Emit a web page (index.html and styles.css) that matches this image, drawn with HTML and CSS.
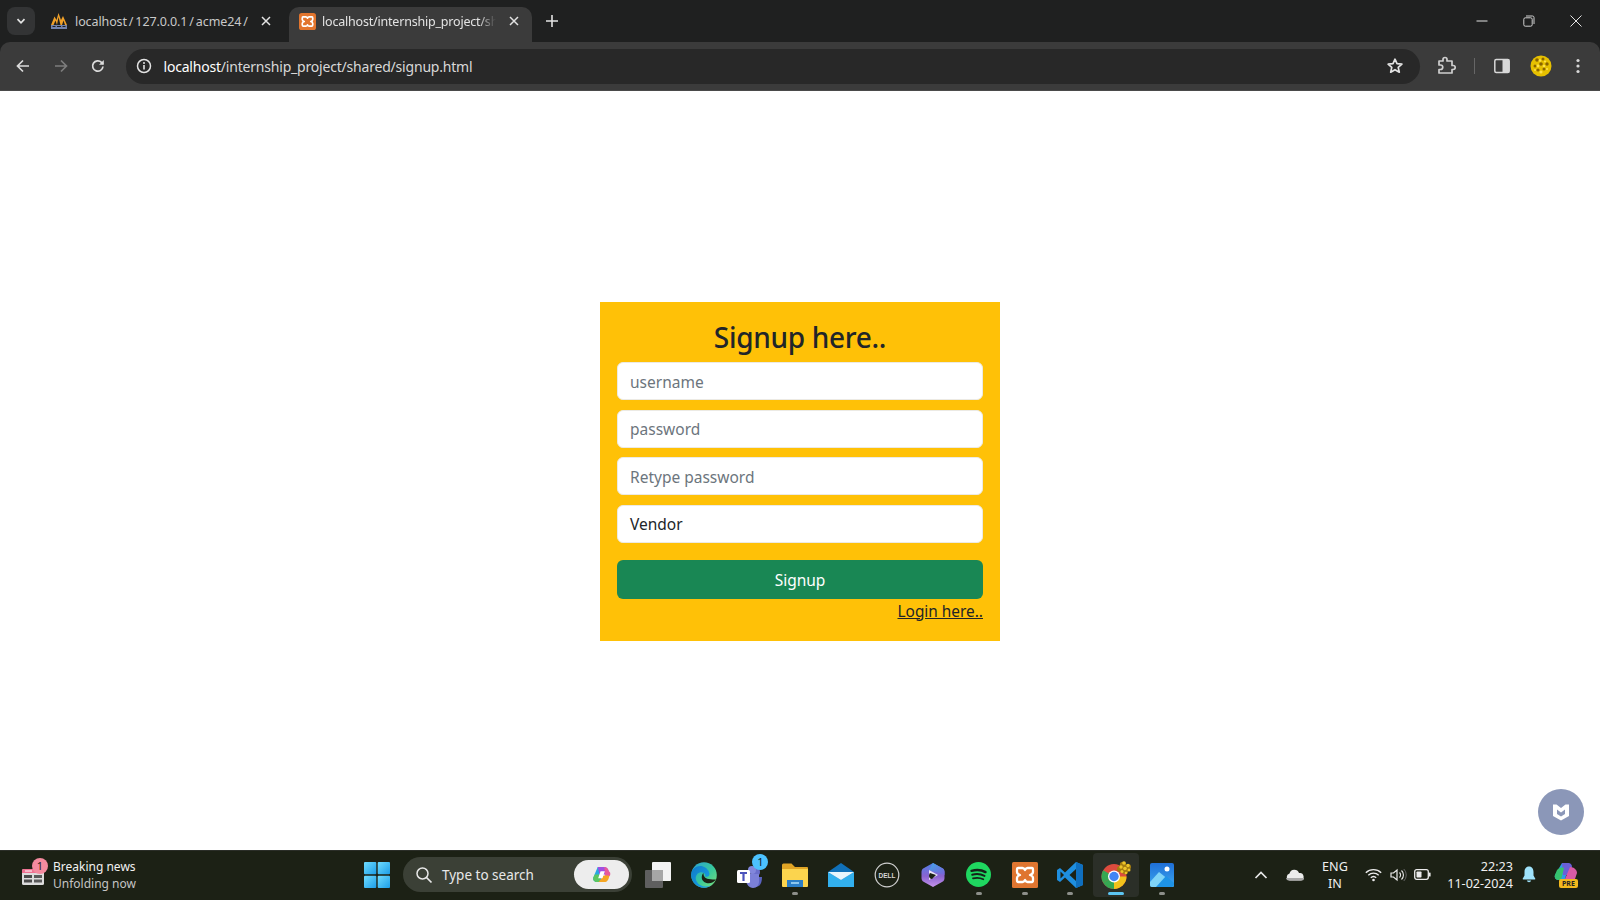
FILE: index.html
```html
<!DOCTYPE html>
<html lang="en">
<head>
<meta charset="utf-8">
<title>Signup</title>
<link rel="stylesheet" href="styles.css">
</head>
<body>
<header class="chrome">
<div class="tabstrip">
  <button class="tabsearch"><svg width="12" height="12" viewBox="0 0 12 12"><path d="M2.5 4.2 6 7.8l3.5-3.6" fill="none" stroke="#e3e3e3" stroke-width="1.7"/></svg></button>
  <div class="tab">
    <svg class="favicon" width="18" height="18" viewBox="0 0 18 18"><path d="M1 13 4.500 4.500 6.500 8 8.500 1 11 8l2-4 4 9z" fill="#f0a028"/><path d="M3.500 13 5.500 8.500 7 13zM8.500 5 10.500 13H7zM12 13l1.500-4.500L15 13z" fill="#1f2020"/><rect x="1" y="13" width="16" height="4" fill="#7283ad"/><path d="M2.500 14.500h3M7 14.500h4M12.500 14.500h3" stroke="#1f2020"/></svg>
    <span class="tabtitle">localhost / 127.0.0.1 / acme24 /</span>
    <svg class="tabclose" width="12" height="12" viewBox="0 0 12 12"><path d="M2 2l8 8M10 2l-8 8" stroke="#e3e3e3" stroke-width="1.5"/></svg>
  </div>
  <div class="tab tab-active">
    <svg class="favicon" width="17" height="17" viewBox="0 0 26 26"><rect width="26" height="26" rx="4" fill="#e2752e"/><path d="M6 6h4.500q1.500 0 2.500 2 1-2 2.500-2H20q1 0 1 2v2q0 2-3 3 3 1 3 3v2q0 2-1 2h-4.500q-1.500 0-2.500-2-1 2-2.500 2H6q-1 0-1-2v-2q0-2 3-3-3-1-3-3V8q0-2 1-2z" fill="none" stroke="#fff" stroke-width="2.600" stroke-linejoin="round"/></svg>
    <span class="tabtitle tabtitle-active">localhost/internship_project/sha</span>
    <svg class="tabclose" width="12" height="12" viewBox="0 0 12 12"><path d="M2 2l8 8M10 2l-8 8" stroke="#e3e3e3" stroke-width="1.5"/></svg>
  </div>
  <svg class="newtab" width="14" height="14" viewBox="0 0 14 14"><path d="M7 1v12M1 7h12" stroke="#e3e3e3" stroke-width="1.600"/></svg>
  <div class="winctrls">
    <svg width="12" height="12" viewBox="0 0 12 12"><path d="M.5 6h11" stroke="#e3e3e3"/></svg>
    <svg width="12" height="12" viewBox="0 0 12 12"><rect x=".8" y="2.800" width="8.400" height="8.400" rx="1.500" fill="none" stroke="#d0d0d0"/><path d="M3 1h6.500A1.500 1.500 0 0 1 11 2.500V9" fill="none" stroke="#d0d0d0"/></svg>
    <svg width="12" height="12" viewBox="0 0 12 12"><path d="M.5.5l11 11M11.500.5l-11 11" stroke="#e3e3e3"/></svg>
  </div>
</div>
<div class="toolbar">
  <svg class="navicon" width="16" height="16" viewBox="0 0 16 16"><path d="M14 8H3M8 2.500 2.500 8 8 13.500" fill="none" stroke="#dcdcdc" stroke-width="1.700"/></svg>
  <svg class="navicon" width="16" height="16" viewBox="0 0 16 16"><path d="M2 8h11M8 2.500 13.500 8 8 13.500" fill="none" stroke="#7d7d7d" stroke-width="1.700"/></svg>
  <svg class="navicon" width="16" height="16" viewBox="0 0 16 16"><path d="M13 8.500A5.200 5.200 0 1 1 11.500 4.300L13 6" fill="none" stroke="#dcdcdc" stroke-width="1.700"/><path d="M13.800 2v4.800H9z" fill="#dcdcdc"/></svg>
  <div class="omnibox">
    <svg class="infoicon" width="16" height="16" viewBox="0 0 16 16"><circle cx="8" cy="8" r="6.500" fill="none" stroke="#e3e3e3" stroke-width="1.500"/><path d="M8 7v4.500" stroke="#e3e3e3" stroke-width="1.600"/><circle cx="8" cy="4.900" r="1" fill="#e3e3e3"/></svg>
    <span class="url"><span class="url-host">localhost</span>/internship_project/shared/signup.html</span>
    <svg class="star" width="18" height="18" viewBox="0 0 18 18"><path d="M9 2.200l2 4.500 4.900.5-3.700 3.200 1.100 4.800L9 12.700l-4.300 2.500 1.100-4.800L2.100 7.200 7 6.700z" fill="none" stroke="#e3e3e3" stroke-width="1.700" stroke-linejoin="round"/></svg>
  </div>
  <svg class="exticon" width="20" height="20" viewBox="0 0 20 20"><path d="M3 5h4V3.500a2 2 0 0 1 4 0V5h5v4.500h1.200a2 2 0 0 1 0 4H16V17H3v-3.500h1.500a2.200 2.200 0 0 0 0-4.500H3z" fill="none" stroke="#cfcfcf" stroke-width="1.700" stroke-linejoin="round"/></svg>
  <div class="tbsep"></div>
  <svg class="panelicon" width="16" height="16" viewBox="0 0 16 16"><rect x=".8" y="1.500" width="14.400" height="13" rx="1.500" fill="none" stroke="#d8d8d8" stroke-width="1.500"/><rect x="8.500" y="1.500" width="6.700" height="13" fill="#d8d8d8"/></svg>
  <svg class="avatar" width="22" height="22" viewBox="0 0 22 22"><circle cx="11" cy="11" r="10.500" fill="#e6c000"/><g fill="#8a6400"><circle cx="7" cy="5" r="1.800"/><circle cx="13" cy="4" r="1.500"/><circle cx="17" cy="9" r="1.700"/><circle cx="5" cy="11" r="1.500"/><circle cx="11" cy="9" r="1.800"/><circle cx="14" cy="14" r="1.500"/><circle cx="8" cy="15" r="1.600"/></g><g fill="#ffe14a"><circle cx="10" cy="5.500" r="1.300"/><circle cx="15" cy="6.500" r="1.100"/><circle cx="8" cy="11" r="1.400"/><circle cx="14" cy="11" r="1.300"/><circle cx="11" cy="17" r="1.500"/><circle cx="17" cy="14" r="1.100"/><circle cx="5" cy="15" r="1"/></g></svg>
  <svg class="menuicon" width="4" height="16" viewBox="0 0 4 16"><circle cx="2" cy="2.500" r="1.600" fill="#d8d8d8"/><circle cx="2" cy="8" r="1.600" fill="#d8d8d8"/><circle cx="2" cy="13.500" r="1.600" fill="#d8d8d8"/></svg>
</div>
</header>
<main class="page">
  <form class="card">
    <h3 class="card-title">Signup here..</h3>
    <input class="field" type="text" placeholder="username">
    <input class="field" type="password" placeholder="password">
    <input class="field" type="password" placeholder="Retype password">
    <div class="field field-select">Vendor</div>
    <button class="submit" type="button">Signup</button>
    <div class="login-row"><a class="login" href="#">Login here..</a></div>
  </form>
  <div class="shield">
    <svg width="20" height="20" viewBox="0 0 20 20"><path d="M2 2.500h3.500L10 6l4.500-3.500H18V14l-8 4.500L2 14z" fill="#fff"/><path d="M6 7.500 10 10.500l4-3V12l-4 2.500L6 12z" fill="#8b97b8"/></svg>
  </div>
</main>
<footer class="taskbar">
  <div class="news">
    <div class="newsicon">
      <svg width="24" height="22" viewBox="0 0 24 22"><rect x="1" y="5" width="22" height="16" rx="1.500" fill="#dcdcdc"/><path d="M1 6.500A1.500 1.500 0 0 1 2.500 5H23v4H1z" fill="#ef7192"/><path d="M4 7h7" stroke="#fff" stroke-width="1"/><rect x="3" y="11" width="8" height="3" fill="#4a4a4a"/><rect x="3" y="15.500" width="8" height="3" fill="#4a4a4a"/><rect x="13" y="11" width="8" height="3" fill="#5a5a5a"/><rect x="13" y="15.500" width="8" height="3" fill="#5a5a5a"/></svg>
      <span class="newsbadge">1</span>
    </div>
    <div class="newstext"><span class="newshead">Breaking news</span><span class="newssub">Unfolding now</span></div>
  </div>
  <svg class="winlogo" width="26" height="26" viewBox="0 0 26 26"><defs><linearGradient id="w" x1="0" y1="0" x2="1" y2="1"><stop offset="0" stop-color="#6fdcff"/><stop offset="1" stop-color="#1c9de8"/></linearGradient></defs><rect width="12.300" height="12.300" rx="1" fill="url(#w)"/><rect x="13.700" width="12.300" height="12.300" rx="1" fill="url(#w)"/><rect y="13.700" width="12.300" height="12.300" rx="1" fill="url(#w)"/><rect x="13.700" y="13.700" width="12.300" height="12.300" rx="1" fill="url(#w)"/></svg>
  <div class="searchbox">
    <svg width="18" height="18" viewBox="0 0 18 18"><circle cx="7.500" cy="7.500" r="5.500" fill="none" stroke="#e8e8e8" stroke-width="1.500"/><path d="M11.500 11.500l5 5" stroke="#e8e8e8" stroke-width="1.700"/></svg>
    <span class="searchtext">Type to search</span>
    <div class="copilotpill">
      <svg width="19" height="19" viewBox="0 0 20 20"><path d="M6 2h6L9 18H5C2 18 .5 15.500 1.500 13z" fill="#28a8e0"/><path d="M6 2h7c2 0 4 1.500 4.500 4L16 10H8z" fill="#a24fe0"/><path d="M13 2c2 0 4 1.500 4.500 4L19 8c1 3-1 5-3 5h-2z" fill="#e85a9a"/><path d="M3 10h6l-1 8H5C2 18 .5 15.500 1.500 13z" fill="#5cc760"/><path d="M12 11h6c0 4-2 7-5 7H7z" fill="#f5a623"/><path d="M9 6.500h4.500L11 14H6.500z" fill="#fff"/></svg>
    </div>
  </div>
  <div class="apps">
    <div class="app"><svg width="26" height="26" viewBox="0 0 26 26"><rect x="0" y="8" width="18" height="18" rx="1" fill="#5f5f5f"/><rect x="7" y="0" width="19" height="19" rx="1" fill="#f2f2f2"/><rect x="7" y="8" width="11" height="11" fill="#a6a6a6"/></svg></div>
    <div class="app"><svg width="26" height="26" viewBox="0 0 26 26"><defs><linearGradient id="e1" x1="0" y1="0" x2="1" y2="1"><stop offset="0" stop-color="#2a9fd8"/><stop offset=".55" stop-color="#38c99a"/><stop offset="1" stop-color="#7fe07a"/></linearGradient><linearGradient id="e2" x1="0" y1="0" x2="1" y2="1"><stop offset="0" stop-color="#0f7ac8"/><stop offset="1" stop-color="#1ba5ea"/></linearGradient></defs><circle cx="13" cy="13" r="12.800" fill="url(#e1)"/><path d="M.2 13C.2 6 7 3 12 4.500c5 1.500 6.500 6 6.500 7.500 0 1.500-1 2.800-3 2.800-1.500 0-2-.8-1-1.800-1-2-3-3-5.500-2.500C5 11.500 3.500 16 6 20c2.500 4 8 6 14 3.500C17.500 25.200 15 25.800 13 25.800 6 25.800.2 20 .2 13z" fill="url(#e2)"/><path d="M25 17.500c-2 3-6 4.500-9.500 3.500-3.500-1-5.500-4-4.500-7.500.3-1 .8-2 1.500-2.500-.3 3 1.500 5.500 5 6 3 .5 5.500.5 7.500.5z" fill="#1c2115"/></svg></div>
    <div class="app"><svg width="30" height="28" viewBox="0 0 30 28"><circle cx="21" cy="11" r="4" fill="#6a6ecb"/><path d="M15 16h12c0 6-2 10-7 10-4 0-5-4-5-10z" fill="#5a62c0"/><circle cx="17" cy="9" r="4" fill="#8287dc"/><path d="M11 13h13v7c0 4-2 7-6 7s-7-4-7-8z" fill="#7b80d8"/><rect x="2" y="9" width="13" height="13" rx="1.500" fill="#fff"/><path d="M5 12h7M8.500 12v8" stroke="#4b53bc" stroke-width="2.200"/></svg><span class="appbadge">1</span></div>
    <div class="app app-running"><svg width="26" height="24" viewBox="0 0 26 24"><path d="M0 2a1.500 1.500 0 0 1 1.500-1.500h8L13 4h12a1 1 0 0 1 1 1v2H0z" fill="#e0a526"/><path d="M0 6h26v17a1 1 0 0 1-1 1H1a1 1 0 0 1-1-1z" fill="#fbd44e"/><rect x="5" y="17" width="16" height="7" fill="#2b7ec8"/><rect x="9" y="19" width="8" height="2" fill="#8cc6ee"/></svg></div>
    <div class="app"><svg width="26" height="24" viewBox="0 0 26 24"><path d="M0 9 13 0l13 9v13a2 2 0 0 1-2 2H2a2 2 0 0 1-2-2z" fill="#1070b8"/><path d="M0 9l13 8 13-8v15H0z" fill="#32b0ee"/><path d="M0 9h26L13 17z" fill="#e8f5fd"/></svg></div>
    <div class="app"><svg width="26" height="26" viewBox="0 0 26 26"><circle cx="13" cy="13" r="11.800" fill="none" stroke="#cfcfcf" stroke-width="1.200"/><text x="13" y="15.500" text-anchor="middle" class="delltext">DELL</text></svg></div>
    <div class="app"><svg width="24" height="26" viewBox="0 0 24 26"><defs><linearGradient id="m1" x1="0" y1="0" x2="0" y2="1"><stop offset="0" stop-color="#4f7fe6"/><stop offset=".55" stop-color="#8a63d0"/><stop offset="1" stop-color="#c593ea"/></linearGradient><linearGradient id="m2" x1="0" y1="0" x2="1" y2="1"><stop offset="0" stop-color="#3fa6e8"/><stop offset="1" stop-color="#7b62d8"/></linearGradient></defs><path d="M12 1 21 6c2 1 2.500 2.500 2.500 4v6c0 1.500-.5 3-2.500 4l-9 5-9-5c-2-1-2.500-2.500-2.500-4v-6C.5 8.500 1 7 3 6z" fill="url(#m1)"/><path d="M12 1 21 6c2 1 2.500 2.500 2.500 4v3L8 8z" fill="url(#m2)"/><path d="M8 8l9 5-9 5z" fill="#eae6f6"/><path d="M9 11l6 2-4 4c-2 0-3-1.500-3-3s.5-2.500 1-3z" fill="#1c2115"/></svg></div>
    <div class="app app-running"><svg width="25" height="25" viewBox="0 0 25 25"><circle cx="12.500" cy="12.500" r="12.500" fill="#1fd760"/><g fill="none" stroke="#15201a" stroke-linecap="round"><path d="M5.500 8.800c5-1.300 10-1 14 1.300" stroke-width="2.400"/><path d="M6.200 12.700c4.500-1.100 8.700-.7 12.300 1.200" stroke-width="2"/><path d="M7 16.300c3.800-.9 7.300-.6 10.300 1" stroke-width="1.700"/></g></svg></div>
    <div class="app app-running"><svg width="26" height="26" viewBox="0 0 26 26"><rect width="26" height="26" rx="1.500" fill="#df7530"/><path d="M6 6h4.500q1.500 0 2.500 2 1-2 2.500-2H20q1 0 1 2v2q0 2-3 3 3 1 3 3v2q0 2-1 2h-4.500q-1.500 0-2.500-2-1 2-2.500 2H6q-1 0-1-2v-2q0-2 3-3-3-1-3-3V8q0-2 1-2z" fill="none" stroke="#fff" stroke-width="2.300" stroke-linejoin="round"/></svg></div>
    <div class="app app-running"><svg width="26" height="26" viewBox="0 0 26 26"><path d="M19 0l7 3v20l-7 3L8 15.500 3 20l-3-2V8l3-2 5 4.500z" fill="#1f8fe0"/><path d="M19 0l7 3v20l-7 3z" fill="#0f6fbf"/><path d="M3.500 9.500v7L7 13z" fill="#1c2115"/><path d="M19 7l-6.500 6 6.500 6z" fill="#1c2115"/></svg></div>
    <div class="app app-active"><svg width="32" height="30" viewBox="0 0 32 30"><circle cx="14" cy="16.500" r="12.500" fill="#dd4b3e"/><path d="M14 16.500 3.200 22.800A12.500 12.500 0 0 1 3.200 10.200z" fill="#35a853"/><path d="M14 16.500 3.200 22.800A12.500 12.500 0 0 0 14 29z" fill="#35a853"/><path d="M14 16.500V29a12.500 12.500 0 0 0 12.500-12.500z" fill="#f2c21b"/><circle cx="14" cy="16.500" r="6" fill="#fff"/><circle cx="14" cy="16.500" r="4.700" fill="#4285f4"/><g fill="#a47c10"><circle cx="23" cy="5" r="3.200"/><circle cx="28" cy="7" r="3"/><circle cx="20" cy="9" r="3"/><circle cx="25" cy="11" r="3.200"/></g><g fill="#eec52a"><circle cx="24" cy="3" r="1.800"/><circle cx="28" cy="5.500" r="1.700"/><circle cx="21" cy="7" r="1.700"/><circle cx="25" cy="8.500" r="1.800"/><circle cx="29" cy="10" r="1.500"/><circle cx="22" cy="11.500" r="1.500"/><circle cx="26" cy="13" r="1.300"/></g></svg></div>
    <div class="app app-running"><svg width="24" height="24" viewBox="0 0 24 24"><defs><linearGradient id="p1" x1="0" y1="0" x2="0" y2="1"><stop offset="0" stop-color="#1f6fd8"/><stop offset="1" stop-color="#3aa6ee"/></linearGradient></defs><rect width="24" height="24" rx="2" fill="url(#p1)"/><path d="M0 19 9 9l15 12v1a2 2 0 0 1-2 2H2a2 2 0 0 1-2-2z" fill="#7fd3f7"/><path d="M6 24 16 13l8 7v2a2 2 0 0 1-2 2z" fill="#1e93e6"/><circle cx="17" cy="6" r="2.500" fill="#fff"/></svg></div>
  </div>
  <div class="tray">
    <svg class="chev" width="14" height="10" viewBox="0 0 14 10"><path d="M1.500 8 7 2.500 12.500 8" fill="none" stroke="#e8e8e8" stroke-width="1.700"/></svg>
    <svg class="cloud" width="18" height="12" viewBox="0 0 18 12"><path d="M4 11.500A3.500 3.500 0 0 1 3.500 4.600 5 5 0 0 1 13 4a3.800 3.800 0 0 1 1.500 7.500z" fill="#ececec"/><path d="M0 9h18v.500a2 2 0 0 1-2 2H3a3 3 0 0 1-3-2.500z" fill="#a9a9a9"/></svg>
    <div class="lang"><span>ENG</span><span>IN</span></div>
    <svg class="wifi" width="17" height="14" viewBox="0 0 17 14"><g fill="none" stroke="#ececec" stroke-width="1.300"><path d="M.8 4.800a11 11 0 0 1 15.400 0"/><path d="M3.300 7.300a7.500 7.500 0 0 1 10.400 0"/><path d="M5.800 9.800a3.900 3.900 0 0 1 5.400 0"/></g><circle cx="8.500" cy="12" r="1.300" fill="#ececec"/></svg>
    <svg class="vol" width="17" height="14" viewBox="0 0 17 14"><path d="M1 5v4h2.500L7 12V2L3.500 5z" fill="none" stroke="#ececec" stroke-width="1.200"/><path d="M9.500 4.500a3.500 3.500 0 0 1 0 5M11.500 2.500a6.200 6.200 0 0 1 0 9" fill="none" stroke="#ececec" stroke-width="1.100"/><path d="M13.800 1a8.500 8.500 0 0 1 0 12" fill="none" stroke="#666" stroke-width="1"/></svg>
    <svg class="batt" width="17" height="11" viewBox="0 0 17 11"><rect x=".7" y=".7" width="13.600" height="9.600" rx="2" fill="none" stroke="#ececec" stroke-width="1.300"/><rect x="2.500" y="2.500" width="5" height="6" rx=".7" fill="#ececec"/><rect x="15" y="3.500" width="1.600" height="4" rx=".6" fill="#ececec"/></svg>
    <div class="clock"><span>22:23</span><span>11-02-2024</span></div>
    <svg class="bell" width="14" height="17" viewBox="0 0 14 17"><path d="M7 .5C3.800.5 2.500 3 2.500 6v3.500L.8 12.500a.6.6 0 0 0 .5.900h11.400a.6.6 0 0 0 .5-.9L11.500 9.500V6C11.500 3 10.200.5 7 .5z" fill="#9fe3fb"/><path d="M4.800 14.500a2.300 2.300 0 0 0 4.400 0z" fill="#9fe3fb"/></svg>
    <div class="copre">
      <svg width="24" height="20" viewBox="0 0 24 20"><path d="M8 1h7l-4 17H5C2 18 0 16 1 13z" fill="#2f9be8"/><path d="M8 1h6c3 0 4 2 4 4l-2 8H9z" fill="#6a5fd8"/><path d="M16 5c4 0 7 3 7 6l-2 6H11z" fill="#d95aa5"/><path d="M3 8c2-2 4-3 7-2l-3 12H5C2 18 0 16 1 13z" fill="#35c26e"/></svg>
      <span class="prebadge">PRE</span>
    </div>
  </div>
</footer>
</body>
</html>
```

FILE: styles.css
```css
* { box-sizing: border-box; }
html, body { margin: 0; height: 100%; }
body {
  width: 1600px;
  height: 900px;
  display: flex;
  flex-direction: column;
  overflow: hidden;
  background: #fff;
  font-family: "Noto Sans", "Open Sans", sans-serif;
}
svg { display: block; flex: none; }

/* browser chrome */
.chrome { flex: none; background: #1f2020; }
.tabstrip {
  height: 42px;
  display: flex;
  align-items: flex-start;
  padding-left: 7px;
}
.tabsearch {
  width: 28px;
  height: 28px;
  margin-top: 7px;
  border: 0;
  border-radius: 8px;
  background: #333435;
  display: flex;
  align-items: center;
  justify-content: center;
  padding: 0;
}
.tab {
  width: 239px;
  height: 35px;
  margin-top: 7px;
  margin-left: 15px;
  display: flex;
  align-items: center;
  color: #c9c9c9;
  font-size: 12.500px;
  padding-bottom: 7px;
}
.tab .favicon { margin-right: 7px; }
.tabtitle { width: 172px; white-space: nowrap; letter-spacing: -.1px; word-spacing: -1.200px; }
.tab .tabclose { margin-left: 13px; }
.tab-active {
  width: 243px;
  margin-left: 0;
  padding-left: 10px;
  background: #3b3b3b;
  border-radius: 10px 10px 0 0;
  color: #e3e3e3;
}
.tab-active .favicon { margin-right: 6px; }
.tabtitle-active {
  width: 174px;
  letter-spacing: -.2px;
  -webkit-mask-image: linear-gradient(90deg, #000 90%, transparent 100%);
  mask-image: linear-gradient(90deg, #000 90%, transparent 100%);
}
.tab-active .tabclose { margin-left: 12px; }
.newtab { margin: 14px 0 0 13px; }
.winctrls {
  margin-left: auto;
  display: flex;
  gap: 35px;
  padding: 15px 18px 0 0;
}
.toolbar {
  height: 49px;
  background: #3b3b3b;
  border-radius: 10px 10px 0 0;
  display: flex;
  align-items: center;
  padding-left: 15px;
  border-bottom: 1px solid #4a4a4a;
}
.navicon { margin-right: 21.500px; }
.navicon:nth-child(3) { margin-right: 19.500px; }
.omnibox {
  width: 1294px;
  height: 35px;
  background: #282828;
  border-radius: 18px;
  display: flex;
  align-items: center;
  padding-left: 10px;
  color: #d8d8d8;
  font-size: 14px;
}
.infoicon { margin-right: 12px; }
.url { letter-spacing: -.2px; }
.url-host { color: #fff; }
.star { margin-left: auto; margin-right: 16px; }
.exticon { margin-left: 16px; }
.tbsep { width: 1px; height: 16px; background: #666; margin-left: 18px; }
.panelicon { margin-left: 19px; }
.avatar { margin-left: 20px; }
.menuicon { margin-left: 24px; }

/* page */
.page {
  flex: 1;
  position: relative;
  display: flex;
  align-items: flex-start;
  justify-content: center;
  padding-top: 211px;
}
.card {
  width: 400px;
  height: 339px;
  background: #ffc107;
  padding: 16px 17px 0;
  display: flex;
  flex-direction: column;
  color: #212529;
}
.card-title {
  margin: 0 0 6px;
  height: 38px;
  text-align: center;
  font-size: 28px;
  font-weight: 500;
  line-height: 38px;
  letter-spacing: -.3px;
}
.field {
  height: 38px;
  flex: none;
  width: 100%;
  border: 1px solid #eceae4;
  border-radius: 6px;
  background: #fff;
  padding: 1px 12px 0;
  margin-bottom: 9.500px;
  font: 15.500px/35px "Noto Sans", "Open Sans", sans-serif;
  color: #212529;
}
.field::placeholder { color: #6c757d; opacity: 1; }
.field-select { margin-bottom: 17px; }
.submit {
  height: 39px;
  flex: none;
  border: 0;
  border-radius: 6px;
  background: #198754;
  color: #fff;
  padding-top: 2px;
  font: 15.500px "Noto Sans", "Open Sans", sans-serif;
}
.login-row { text-align: right; margin-top: 1px; font-size: 15.400px; line-height: 24px; }
.login { color: #212529; }
.shield {
  position: absolute;
  right: 16px;
  bottom: 15px;
  width: 46px;
  height: 46px;
  border-radius: 50%;
  background: #8b97b8;
  display: flex;
  align-items: center;
  justify-content: center;
}

/* taskbar */
.taskbar {
  height: 50px;
  flex: none;
  background: #1c2115;
  border-top: 1px solid #2b2e28;
  display: flex;
  align-items: center;
  padding: 0 0 2px 21px;
  color: #f0f0f0;
}
.news { width: 343px; display: flex; align-items: center; flex: none; }
.newsicon { position: relative; width: 24px; height: 22px; margin-right: 8px; }
.newsbadge {
  position: absolute;
  top: -6px;
  left: 11px;
  width: 16px;
  height: 16px;
  border-radius: 50%;
  background: #f48a9f;
  color: #222;
  font-size: 11px;
  line-height: 16px;
  text-align: center;
}
.newstext { display: flex; flex-direction: column; font-size: 12px; line-height: 17px; }
.newshead { color: #f2f2f2; }
.newssub { color: #c4c4c4; }
.winlogo { margin-right: 13px; }
.searchbox {
  width: 229px;
  height: 35px;
  flex: none;
  border-radius: 18px;
  background: #3b4036;
  display: flex;
  align-items: center;
  padding-left: 12px;
  font-size: 13.500px;
  color: #e8e8e8;
}
.searchtext { margin-left: 9px; }
.copilotpill {
  margin-left: auto;
  margin-right: 3px;
  width: 55px;
  height: 29px;
  border-radius: 15px;
  background: #ededed;
  display: flex;
  align-items: center;
  justify-content: center;
}
.apps { display: flex; margin-left: 3px; }
.app {
  position: relative;
  width: 45.830px;
  height: 44px;
  display: flex;
  align-items: center;
  justify-content: center;
  border-radius: 4px;
}
.app-running::after {
  content: "";
  position: absolute;
  left: 20px;
  bottom: 2px;
  width: 6px;
  height: 3px;
  border-radius: 2px;
  background: #8d8f8a;
}
.app-active { background: #2b2f28; }
.app-active::after {
  content: "";
  position: absolute;
  left: 15px;
  bottom: 2px;
  width: 16px;
  height: 3px;
  border-radius: 2px;
  background: #5cc5f2;
}
.appbadge {
  position: absolute;
  top: 1px;
  right: 4px;
  width: 16px;
  height: 16px;
  border-radius: 50%;
  background: #4cc2ff;
  color: #10202a;
  font-size: 11px;
  line-height: 16px;
  text-align: center;
}
.delltext { font: 700 6.500px "Liberation Sans", sans-serif; fill: #d8d8d8; }
.tray {
  display: flex;
  align-items: center;
  color: #f0f0f0;
  font-size: 12.600px;
}
.chev { margin-left: 69px; }
.cloud { margin-left: 18px; }
.lang {
  width: 40px;
  margin-left: 11px;
  display: flex;
  flex-direction: column;
  align-items: center;
  line-height: 17px;
}
.wifi { margin-left: 10px; }
.vol { margin-left: 8px; }
.batt { margin-left: 7px; }
.clock {
  width: 82px;
  display: flex;
  flex-direction: column;
  align-items: flex-end;
  line-height: 17px;
}
.bell { margin-left: 9px; }
.copre { position: relative; margin-left: 18px; width: 24px; height: 26px; }
.prebadge {
  position: absolute;
  left: 5px;
  bottom: 0;
  width: 19px;
  height: 9px;
  border-radius: 2px;
  background: #f2b81d;
  color: #222;
  font-size: 7px;
  line-height: 9px;
  font-weight: 700;
  text-align: center;
}
```
